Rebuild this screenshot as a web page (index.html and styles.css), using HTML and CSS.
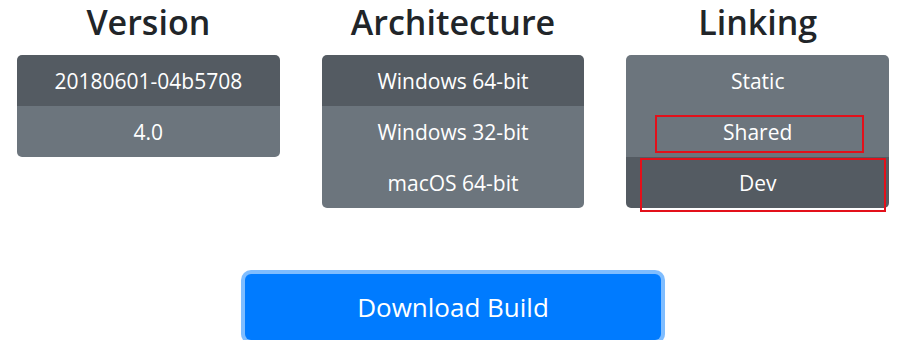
FILE: index.html
```html
<!DOCTYPE html>
<html lang="en">
<head>
    <meta charset="UTF-8" />
    <meta name="viewport" content="width=device-width, initial-scale=1.0" />
    <title>Download Builds</title>
    <link rel="stylesheet" href="styles.css">
</head>
<body>
    <div class="container">
        <div class="options">
            <div class="group">
                <h2>Version</h2>
                <div class="btn-group">
                    <button class="opt active">20180601-04b5708</button>
                    <button class="opt">4.0</button>
                </div>
            </div>

            <div class="group">
                <h2>Architecture</h2>
                <div class="btn-group">
                    <button class="opt active">Windows 64-bit</button>
                    <button class="opt">Windows 32-bit</button>
                    <button class="opt">macOS 64-bit</button>
                </div>
            </div>

            <div class="group">
                <h2>Linking</h2>
                <div class="btn-group marked">
                    <button class="opt">Static</button>
                    <button class="opt">Shared</button>
                    <button class="opt active">Dev</button>
                    <!-- annotation boxes -->
                    <span class="mark mark-shared"></span>
                    <span class="mark mark-dev"></span>
                </div>
            </div>
        </div>

        <div class="actions">
            <button class="download">Download Build</button>
        </div>
    </div>
</body>
</html>
```

FILE: styles.css
```css
:root {
  --text-dark: #212529;
  --secondary: #6c757d;
  --secondary-active: #545b62;
  --primary: #007bff;
  --focus-ring: 0 0 0 4px rgba(0, 123, 255, 0.5);
  --mark-red: #e3101a;
}

body {
  margin: 0;
  font-family: 'Open Sans', 'Noto Sans', sans-serif;
  background: #fff;
  color: var(--text-dark);
}

.container {
  width: 872px;
  padding-left: 17px;
}

.options {
  display: flex;
  gap: 42px;
}

.group {
  width: 263px;
  display: flex;
  flex-direction: column;
}

h2 {
  margin: 0;
  height: 55px;
  font-size: 34px;
  font-weight: 600;
  line-height: 44px;
  text-align: center;
}

.btn-group {
  display: flex;
  flex-direction: column;
  border-radius: 5px;
}

.marked {
  position: relative;
}

.opt {
  height: 51px;
  border: none;
  margin: 0;
  padding: 0;
  background-color: var(--secondary);
  color: #fff;
  font-family: inherit;
  font-size: 21px;
  cursor: pointer;
}

.opt:first-child {
  border-radius: 5px 5px 0 0;
}

.btn-group > .opt:last-of-type {
  border-radius: 0 0 5px 5px;
}

.opt.active {
  background-color: var(--secondary-active);
}

/* red rectangles drawn on the screenshot */
.mark {
  position: absolute;
  border: 2px solid var(--mark-red);
  box-sizing: border-box;
  pointer-events: none;
}

.mark-shared {
  left: 29px;
  top: 60px;
  width: 209px;
  height: 38px;
}

.mark-dev {
  left: 14px;
  top: 103px;
  width: 246px;
  height: 54px;
}

.actions {
  display: flex;
  justify-content: center;
  margin-top: 66px;
}

.download {
  width: 416px;
  height: 66px;
  border: none;
  border-radius: 6px;
  background-color: var(--primary);
  color: #fff;
  font-family: inherit;
  font-size: 26px;
  box-shadow: var(--focus-ring);
  cursor: pointer;
}
```
